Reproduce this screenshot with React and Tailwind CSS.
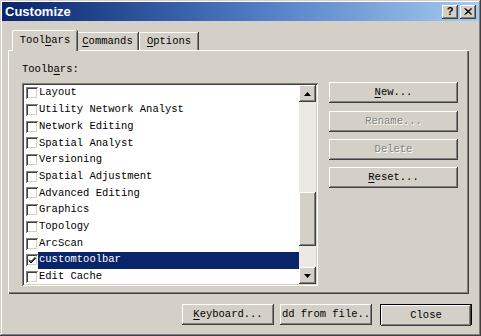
import React from "react"

const raised = "shadow-[inset_-1px_-1px_#404040,inset_1px_1px_#ffffff,inset_-2px_-2px_#808080,inset_2px_2px_#d4d0c8]"
const sunken = "shadow-[inset_1px_1px_#808080,inset_-1px_-1px_#ffffff,inset_2px_2px_#404040,inset_-2px_-2px_#d4d0c8]"
const mono = "font-['Liberation_Mono',monospace] text-[10.5px]"

const rows = [
	"Layout",
	"Utility Network Analyst",
	"Network Editing",
	"Spatial Analyst",
	"Versioning",
	"Spatial Adjustment",
	"Advanced Editing",
	"Graphics",
	"Topology",
	"ArcScan",
	"customtoolbar",
	"Edit Cache",
]

const Check = ({ checked }) => (
	<div className={`w-[12px] h-[12px] shrink-0 bg-white ${sunken}`}>
		{checked && (
			<svg width="12" height="12" viewBox="0 0 12 12">
				<path d="M3 5.5 L5 7.5 L9.5 3 M3 6.5 L5 8.5 L9.5 4 M3 7 L5 9 L9.5 4.5" stroke="#000" strokeWidth="1" fill="none" />
			</svg>
		)}
	</div>
)

const Btn = ({ children, disabled, className = "" }) => (
	<div className={`flex items-center justify-center h-[21px] bg-[#d4d0c8] ${raised} ${mono} ${disabled ? "text-[#808080] [text-shadow:1px_1px_#ffffff]" : "text-black"} ${className}`}>
		{children}
	</div>
)

const U = ({ children }) => <span className="underline underline-offset-2">{children}</span>

const Arrow = ({ up }) => (
	<div className={`w-[17px] h-[17px] bg-[#d4d0c8] ${raised} flex items-center justify-center`}>
		<svg width="7" height="4" viewBox="0 0 7 4">
			<path d={up ? "M3.5 0 L7 4 L0 4 Z" : "M0 0 L7 0 L3.5 4 Z"} fill="#000" />
		</svg>
	</div>
)

export default function App() {
	return (
		<div className={`w-[481px] h-[336px] bg-[#d4d0c8] p-[2px] flex flex-col shadow-[inset_-1px_-1px_#404040,inset_1px_1px_#d4d0c8,inset_-2px_-2px_#808080,inset_2px_2px_#ffffff] overflow-hidden`}>
			{/* title bar */}
			<div className="h-[19px] flex items-center justify-between pl-[3px] pr-[3px] bg-linear-to-r from-[#0a246a] via-[#4a76c0] via-50% to-[#a6caf0]">
				<span className="text-white font-bold text-[13px] font-['Liberation_Sans',sans-serif] leading-none">Customize</span>
				<div className="flex gap-[2px]">
					<div className={`w-[16px] h-[14px] bg-[#d4d0c8] ${raised} flex items-center justify-center text-[11px] font-bold font-['Liberation_Sans',sans-serif] leading-none`}>?</div>
					<div className={`w-[16px] h-[14px] bg-[#d4d0c8] ${raised} flex items-center justify-center`}>
						<svg width="8" height="7" viewBox="0 0 8 7">
							<path d="M0.5 0.5 L7 6.5 M1.5 0.5 L8 6.5 M7 0.5 L0.5 6.5 M8 0.5 L1.5 6.5" stroke="#000" strokeWidth="1" />
						</svg>
					</div>
				</div>
			</div>

			<div className="pl-[6px] pt-[9px]">
				{/* tabs */}
				<div className="flex items-end h-[20px] ml-[4px]">
					<div className={`relative z-10 -mb-px h-[21px] w-[65px] bg-[#d4d0c8] border-t border-l border-white shadow-[inset_-1px_0_#808080,1px_0_#404040] rounded-t-[2px] flex items-center justify-center ${mono}`}>
						Tool<U>b</U>ars
					</div>
					<div className={`h-[18px] w-[61px] border-t border-white shadow-[inset_-1px_0_#808080,1px_0_#404040] flex items-center justify-center ${mono}`}>
						<U>C</U>ommands
					</div>
					<div className={`h-[18px] w-[59px] ml-[1px] border-t border-l border-white shadow-[inset_-1px_0_#808080,1px_0_#404040] flex items-center justify-center ${mono}`}>
						<U>O</U>ptions
					</div>
				</div>

				{/* panel */}
				<div className="w-[461px] h-[244px] shadow-[inset_1px_1px_#ffffff,inset_-1px_-1px_#404040,inset_-2px_-2px_#808080] flex pl-[14px]">
					<div className="flex flex-col pt-[13px]">
						<div className={`h-[12px] leading-[12px] ${mono}`}>Toolb<U>a</U>rs:</div>
						<div className={`mt-[8px] w-[296px] h-[203px] bg-white p-[2px] flex ${sunken}`}>
							<div className="flex-1 flex flex-col overflow-hidden">
								{rows.map((r) => {
									const sel = r === "customtoolbar"
									return (
										<div key={r} className="h-[16.7px] shrink-0 flex items-center pl-[2px]">
											<Check checked={sel} />
											<div className={`h-full flex-1 flex items-center pl-px ${mono} ${sel ? "bg-[#0a246a] text-white" : "text-black"}`}>{r}</div>
										</div>
									)
								})}
							</div>
							<div className="w-[17px] flex flex-col">
								<Arrow up />
								<div className="flex-1 bg-[#ebe9e4] flex flex-col">
									<div className="h-[90px]" />
									<div className={`h-[54px] bg-[#d4d0c8] ${raised}`} />
								</div>
								<Arrow />
							</div>
						</div>
					</div>
					<div className="ml-[11px] pt-[32px] flex flex-col w-[129px]">
						<Btn><U>N</U>ew...</Btn>
						<Btn disabled className="mt-[8px]">Rename...</Btn>
						<Btn disabled className="mt-[7px]">Delete</Btn>
						<Btn className="mt-[7px]"><U>R</U>eset...</Btn>
					</div>
				</div>
			</div>

			{/* bottom buttons */}
			<div className="flex justify-end pr-[7px] mt-[10px]">
				<Btn className="w-[92px]"><U>K</U>eyboard...</Btn>
				<Btn className="w-[92px] ml-[6px] overflow-hidden whitespace-nowrap">dd from file..</Btn>
				<div className="w-[92px] h-[21px] ml-[8px] border border-black">
					<Btn className="h-[19px]">Close</Btn>
				</div>
			</div>
		</div>
	)
}
